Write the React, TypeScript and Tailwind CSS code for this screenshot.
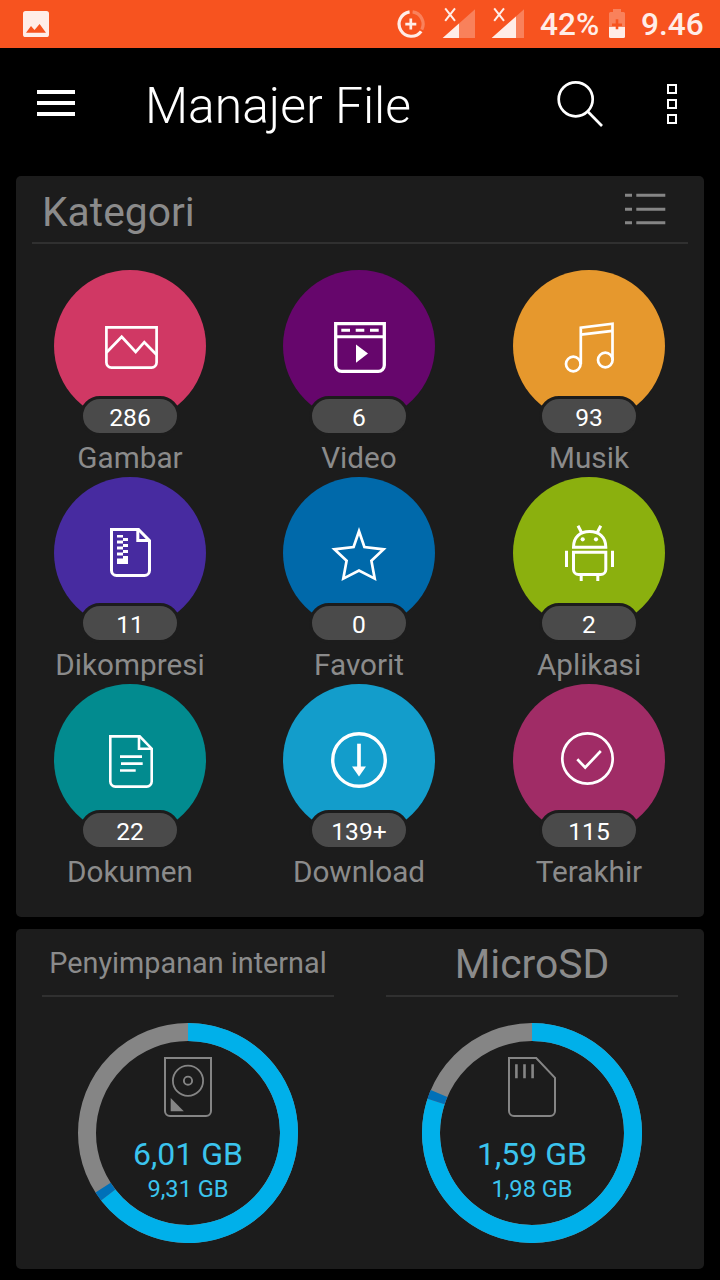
import type { ReactNode } from "react"

interface Category {
  id: string
  label: string
  count: string
  color: string
  icon: ReactNode
}

interface Storage {
  id: string
  name: string
  nameClass: string
  used: string
  total: string
  usedAngle: number
  systemAngle: number
  icon: ReactNode
}

// Category icons are drawn on the 152px disc itself
const categories: Category[] = [
  {
    id: "images",
    label: "Gambar",
    count: "286",
    color: "bg-[#d03864]",
    icon: (
      <g strokeWidth="2.7">
        <path d="M52.4 57.4H102.6V92.6a5 5 0 0 1-5 5H57.4a5 5 0 0 1-5-5Z" />
        <path d="M52.5 82.5L67.7 66.8L81.7 82L90.3 72.2L102.6 84.8" />
      </g>
    ),
  },
  {
    id: "videos",
    label: "Video",
    count: "6",
    color: "bg-[#66066c]",
    icon: (
      <g strokeWidth="3.3">
        <path d="M52.7 53.7H101.3V95.3a6 6 0 0 1-6 6H58.7a6 6 0 0 1-6-6Z" />
        <path d="M52.7 66.8H101.3" strokeWidth="3" />
        <path d="M58.3 60.2H67M72.7 60.2H81.3M87 60.2H95.7" strokeWidth="3" />
        <path d="M73 74.5L85 83.5L73 92.7Z" fill="#fff" stroke="none" />
      </g>
    ),
  },
  {
    id: "music",
    label: "Musik",
    count: "93",
    color: "bg-[#e6982d]",
    icon: (
      <g strokeWidth="2.7">
        <circle cx="60.3" cy="94" r="7.3" />
        <circle cx="92.3" cy="90" r="7.3" />
        <path d="M67.8 94V57.7L99.5 53.7V90" />
        <path d="M67.8 64.6L99.5 60.8" />
      </g>
    ),
  },
  {
    id: "archives",
    label: "Dikompresi",
    count: "11",
    color: "bg-[#472ba0]",
    icon: (
      <g strokeWidth="3">
        <path d="M57.5 52.5H84.5L95.5 63.7V93.5a5 5 0 0 1-5 5H62.5a5 5 0 0 1-5-5Z" />
        <path d="M83.8 52.5V63.5H95.5" />
        <path
          d="M63 58h6v3h5v3h-5v3h5v3h-5v3h5v3h-5v3h5v8H63v-5.5h6v-3h-6v-3h6v-3h-6v-3h6v-3h-6v-3h6v-3h-6Z"
          fill="#fff"
          stroke="none"
        />
      </g>
    ),
  },
  {
    id: "favorites",
    label: "Favorit",
    count: "0",
    color: "bg-[#0069aa]",
    icon: (
      <path
        strokeWidth="2.7"
        d="M76 54.2L81.4 70L100.6 72.3L88.4 83.8L91.7 101.6L76 93.6L60.3 101.6L63.6 83.8L51.4 72.3L70.6 70Z"
      />
    ),
  },
  {
    id: "apps",
    label: "Aplikasi",
    count: "2",
    color: "bg-[#8bb00e]",
    icon: (
      <g strokeWidth="3">
        <path d="M60.5 70.2C60.5 60 67 54.6 76.6 54.6S92.8 60 92.8 70.2Z" />
        <path d="M60.5 75.2H92.8V92.5a5 5 0 0 1-5 5H65.5a5 5 0 0 1-5-5Z" />
        <path d="M53.5 73.7V90M99.5 73.7V90M68.2 98V104M84.8 98V104" />
        <path d="M65 48.7L68.8 56M87.8 48.7L84 56" />
        <circle cx="69.7" cy="62.3" r="2.1" fill="#fff" stroke="none" />
        <circle cx="83" cy="62.3" r="2.1" fill="#fff" stroke="none" />
      </g>
    ),
  },
  {
    id: "documents",
    label: "Dokumen",
    count: "22",
    color: "bg-[#028b8f]",
    icon: (
      <g strokeWidth="2.6">
        <path d="M56.3 52.4H85.7L97.7 64.7V97.6a5 5 0 0 1-5 5H61.3a5 5 0 0 1-5-5Z" />
        <path d="M85 52.4V64.7H97.7" />
        <path d="M66 72.6H88M67 79.6H88.7M66 86.5H81.7" />
      </g>
    ),
  },
  {
    id: "downloads",
    label: "Download",
    count: "139+",
    color: "bg-[#139dcb]",
    icon: (
      <g strokeWidth="3.4">
        <circle cx="76" cy="76" r="26.3" />
        <path d="M76 59.7V84" strokeWidth="3.7" />
        <path d="M69 82.5H83L76 92.5Z" fill="#fff" stroke="none" />
      </g>
    ),
  },
  {
    id: "recent",
    label: "Terakhir",
    count: "115",
    color: "bg-[#a02c66]",
    icon: (
      <g strokeWidth="2.7">
        <circle cx="74.5" cy="74.5" r="25.2" />
        <path d="M64.3 75.3L72.2 83.5L87.8 67" />
      </g>
    ),
  },
]

const storages: Storage[] = [
  {
    id: "internal",
    name: "Penyimpanan internal",
    nameClass: "pt-1 text-[28.8px]",
    used: "6,01 GB",
    total: "9,31 GB",
    usedAngle: 232.2,
    systemAngle: 237.2,
    icon: (
      <>
        <path d="M1 1H47V54a5 5 0 0 1-5 5H6a5 5 0 0 1-5-5Z" strokeWidth="2" />
        <circle cx="24" cy="23.7" r="15.1" strokeWidth="1.8" />
        <circle cx="24" cy="23.7" r="4.1" strokeWidth="1.9" />
        <path d="M6.7 41L19.8 54.2H6.7Z" fill="#858585" stroke="none" />
      </>
    ),
  },
  {
    id: "microsd",
    name: "MicroSD",
    nameClass: "pt-1.5 text-[40.8px]",
    used: "1,59 GB",
    total: "1,98 GB",
    usedAngle: 288.2,
    systemAngle: 293,
    icon: (
      <>
        <path d="M1 1H28.2L47 20.8V54a5 5 0 0 1-5 5H6a5 5 0 0 1-5-5Z" strokeWidth="2" />
        <path d="M8.4 7.3V21.3M16.5 7.3V21.3M24.6 7.3V21.3" strokeWidth="2.6" />
      </>
    ),
  },
]

function arc(from: number, to: number) {
  const point = (deg: number) => {
    const rad = (deg * Math.PI) / 180
    return `${110 + 101 * Math.sin(rad)} ${110 - 101 * Math.cos(rad)}`
  }
  return `M${point(from)}A101 101 0 ${to - from > 180 ? 1 : 0} 1 ${point(to)}`
}

function SignalIcon({ level, className }: { level: number; className: string }) {
  return (
    <svg viewBox="0 0 34 30" className={`w-[34px] h-[30px] ${className}`}>
      <path d="M33 0.3V29H0.7Z" fill="#fff" fillOpacity="0.27" />
      <path d={`M0.7 29H${level}V${29 - (level - 0.7) * 0.888}Z`} fill="#ffede8" />
      <path d="M3.2 -0.6L13 11.9M13 -0.6L3.2 11.9" stroke="#ffede8" strokeWidth="2" />
    </svg>
  )
}

function StatusBar() {
  return (
    <div className="flex items-start h-12 bg-[#f7531f] text-[#ffede8] text-[31.6px] leading-[48px] font-medium">
      <svg viewBox="0 0 26 26" className="w-[26px] h-[26px] ml-[23px] mt-[11px]">
        <rect width="26" height="26" rx="2.6" fill="#ffede8" />
        <path d="M3 21.7L8 15L11.5 19L16.6 13L23 21.7Z" fill="#f7531f" />
      </svg>
      <svg viewBox="0 0 30 30" className="w-[30px] h-[30px] ml-[347px] mt-[9px]" fill="none">
        <path d="M16.6 2.9A12.3 12.3 0 0 1 25.8 20.6" stroke="#fff" strokeOpacity="0.27" strokeWidth="3.2" />
        <path d="M13.6 2.8A12.3 12.3 0 1 0 25.2 22.4" stroke="#ffede8" strokeWidth="3.2" />
        <path d="M14.8 9.6V20.6M9.3 15.1H20.3" stroke="#ffede8" strokeWidth="2.7" />
      </svg>
      <SignalIcon level={17} className="ml-4 mt-[9px] overflow-visible" />
      <SignalIcon level={25} className="ml-[15px] mt-[9px] overflow-visible" />
      <span className="w-[60px] ml-[15px] pt-px whitespace-nowrap">42%</span>
      <svg viewBox="0 0 16 29" className="w-4 h-[29px] ml-[9px] mt-[9px]">
        <path d="M4 0H12V3H14.5A1.5 1.5 0 0 1 16 4.5V18H0V4.5A1.5 1.5 0 0 1 1.5 3H4Z" fill="#fff" fillOpacity="0.27" />
        <path d="M0 18H16V27.5A1.5 1.5 0 0 1 14.5 29H1.5A1.5 1.5 0 0 1 0 27.5Z" fill="#ffede8" />
        <path d="M8 10.3V20.3M3 15.7H13" stroke="#f7531f" strokeWidth="2.6" />
      </svg>
      <span className="ml-4 pt-px whitespace-nowrap">9.46</span>
    </div>
  )
}

function Toolbar() {
  return (
    <header className="flex items-start h-32">
      <button className="flex flex-col gap-[7px] ml-[37px] mt-[42px]">
        <span className="w-[38px] h-1 bg-white" />
        <span className="w-[38px] h-1 bg-white" />
        <span className="w-[38px] h-1 bg-white" />
      </button>
      <h1 className="w-[396px] ml-[70px] mt-[29px] text-[49.8px] leading-[58px] font-light text-white">Manajer File</h1>
      <svg viewBox="0 0 50 50" className="w-[50px] h-[50px] ml-[14px] mt-[31px]" fill="none" stroke="#fff" strokeWidth="2.7">
        <circle cx="20.7" cy="20.3" r="17" />
        <path d="M33 32.7L47 47" />
      </svg>
      <button className="flex flex-col gap-[5px] ml-[62px] mt-9">
        <span className="w-2.5 h-2.5 border-[2.5px] border-white" />
        <span className="w-2.5 h-2.5 border-[2.5px] border-white" />
        <span className="w-2.5 h-2.5 border-[2.5px] border-white" />
      </button>
    </header>
  )
}

function CategoryItem({ category }: { category: Category }) {
  return (
    <div className="flex flex-col items-center h-[207px]">
      <div className={`relative w-[152px] h-[152px] rounded-full ${category.color}`}>
        <svg viewBox="0 0 152 152" className="w-full h-full" fill="none" stroke="#fff">
          {category.icon}
        </svg>
        {/* Item count */}
        <span className="absolute left-[26px] top-[126px] w-[100px] h-[40px] rounded-[20px] border-3 border-[#1c1c1c] bg-[#4a4a4a] text-white text-[24.6px] leading-[37px] text-center">
          {category.count}
        </span>
      </div>
      <span className="mt-[18px] text-[29.7px] leading-[35px] whitespace-nowrap">{category.label}</span>
    </div>
  )
}

function StorageItem({ storage }: { storage: Storage }) {
  return (
    <div className="flex flex-col items-center w-[292px]">
      <h2 className={`flex items-center justify-center w-full h-[68px] border-b-2 border-[#303030] whitespace-nowrap ${storage.nameClass}`}>
        {storage.name}
      </h2>
      <div className="relative w-[220px] h-[220px] mt-[26px]">
        <svg viewBox="0 0 220 220" className="w-full h-full" fill="none" strokeWidth="18">
          <circle cx="110" cy="110" r="101" stroke="#858585" />
          <path d={arc(0, storage.usedAngle)} stroke="#00b0ea" />
          <path d={arc(storage.usedAngle, storage.systemAngle)} stroke="#0070b8" />
        </svg>
        <div className="absolute inset-0 flex flex-col items-center pt-[34px] text-[#3bc4ee]">
          <svg viewBox="0 0 48 60" className="w-12 h-[60px]" fill="none" stroke="#858585">
            {storage.icon}
          </svg>
          <span className="mt-[18px] text-[32px] leading-[38px]">{storage.used}</span>
          <span className="mt-0.5 text-[23.6px] leading-[28px]">{storage.total}</span>
        </div>
      </div>
    </div>
  )
}

export default function App() {
  return (
    <div className="w-[720px] h-[1280px] overflow-hidden bg-black font-[Roboto,sans-serif] text-[#8b8b8b]">
      <StatusBar />
      <Toolbar />

      <main className="flex flex-col gap-3 px-4">
        {/* Categories */}
        <section className="h-[741px] rounded-[5px] bg-[#1c1c1c]">
          <div className="flex items-start justify-between h-[68px] mx-4 border-b-2 border-[#303030]">
            <h2 className="ml-2.5 mt-3 text-[40.8px] leading-[48px]">Kategori</h2>
            <svg viewBox="0 0 42 32" className="w-[42px] h-8 mr-[22px] mt-[17px]" stroke="#858585" strokeWidth="3">
              <path d="M1 2.2H8M12.3 2.2H41.3M1 16.2H8M12.3 16.2H41.3M1 29.8H8M12.3 29.8H41.3" />
            </svg>
          </div>
          <div className="grid grid-cols-[228px_230px_230px] pt-[26px]">
            {categories.map((category) => (
              <CategoryItem key={category.id} category={category} />
            ))}
          </div>
        </section>

        {/* Storage */}
        <section className="flex justify-between h-[340px] px-[26px] rounded-[5px] bg-[#1c1c1c]">
          {storages.map((storage) => (
            <StorageItem key={storage.id} storage={storage} />
          ))}
        </section>
      </main>
    </div>
  )
}
